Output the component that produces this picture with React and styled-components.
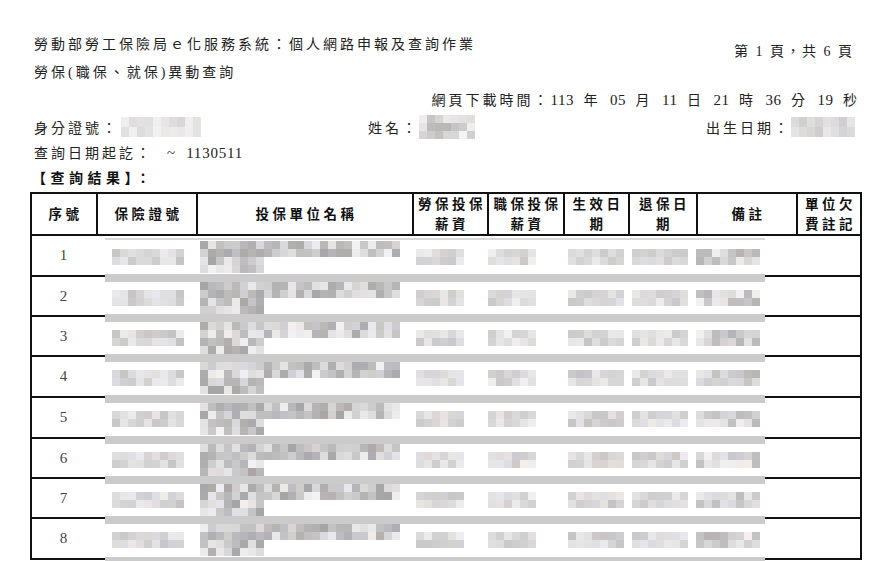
import React from "react";
import styled, { createGlobalStyle } from "styled-components";

const GlobalStyle = createGlobalStyle`
  html, body { margin: 0; padding: 0; background: #fff; }
  body {
    font-family: "Liberation Serif", "Noto Sans CJK TC", serif;
    color: #222;
  }
`;

const COLS = "66px 100px 216px 75px 76px 65px 68px 100px 62px";

const Page = styled.div`
  width: 892px;
  height: 561px;
  overflow: hidden;
  box-sizing: border-box;
  padding: 31px 30px 0 30px;
  font-size: 14px;
  letter-spacing: 3px;
`;

const TopRow = styled.div`
  display: flex;
  justify-content: space-between;
  align-items: flex-start;
`;

const TitleBlock = styled.div`
  padding-left: 4px;
`;

const Line = styled.div`
  line-height: 28px;
  white-space: nowrap;
`;

const PageNo = styled.div`
  margin-top: 7px;
  padding-right: 8px;
  line-height: 28px;
  letter-spacing: 2px;
  white-space: nowrap;
`;

const Download = styled.div`
  text-align: right;
  line-height: 26px;
  padding-right: 2px;
  letter-spacing: 3px;
  word-spacing: 3px;
  white-space: nowrap;
`;

const InfoRow = styled.div`
  display: flex;
  align-items: center;
  height: 26px;
  padding-left: 4px;
  padding-right: 7px;
`;

const InfoItem = styled.div`
  display: flex;
  align-items: center;
  white-space: nowrap;
  width: ${(p) => (p.$w ? `${p.$w}px` : "auto")};
  margin-left: ${(p) => (p.$push ? "auto" : "0")};
`;

const Query = styled.div`
  padding-left: 4px;
  line-height: 26px;
  white-space: nowrap;
`;

const Num = styled.span`
  font-size: 15px;
  letter-spacing: ${(p) => (p.$ls != null ? p.$ls : 3)}px;
  margin-left: ${(p) => p.$ml || 0}px;
`;

const ResultLabel = styled.div`
  padding-left: 2px;
  height: 24px;
  line-height: 24px;
  font-weight: 700;
  letter-spacing: 4.5px;
  color: #111;
  margin-bottom: 1px;
`;

const Table = styled.div`
  width: 832px;
  box-sizing: border-box;
  border: 2px solid #111;
  border-bottom: none;
`;

const HeaderRow = styled.div`
  display: grid;
  grid-template-columns: ${COLS};
  height: 42px;
  box-sizing: border-box;
  border-bottom: 2px solid #111;
`;

const HeadCell = styled.div`
  display: flex;
  align-items: center;
  justify-content: center;
  text-align: center;
  box-sizing: border-box;
  border-right: 2px solid #111;
  font-family: "Noto Sans CJK TC", sans-serif;
  font-weight: 700;
  font-size: 13.5px;
  line-height: 19.6px;
  letter-spacing: 3.5px;
  padding-left: 3px;
  color: #111;
  &:last-child { border-right: none; }
`;

const BodyRow = styled.div`
  position: relative;
  display: grid;
  grid-template-columns: ${COLS};
  height: ${(p) => p.$h}px;
  box-sizing: border-box;
  border-bottom: 2px solid #111;
`;

const Bar = styled.div`
  position: absolute;
  left: 73px;
  width: 660px;
  bottom: -7px;
  height: 8px;
  background: #cbcbcb;
  z-index: 1;
`;

const TopBar = styled.div`
  position: absolute;
  left: 73px;
  width: 660px;
  top: 2px;
  height: 2px;
  background: #d9d9d9;
`;

const NumCell = styled.div`
  display: flex;
  align-items: center;
  justify-content: center;
  font-family: "Liberation Serif", serif;
  font-size: 15px;
  letter-spacing: 0;
  color: #444;
  padding-right: 3px;
`;

const BlurCell = styled.div`
  min-width: 0;
`;

const PixelGrid = styled.div`
  display: grid;
  grid-template-columns: repeat(${(p) => p.$cols}, ${(p) => p.$pw}px);
  grid-auto-rows: ${(p) => p.$ph}px;
  margin-top: ${(p) => p.$mt || 0}px;
  margin-left: ${(p) => p.$ml || 0}px;
  width: max-content;
`;

const Pixel = styled.div``;

const rand = (seed) => {
  const x = Math.sin(seed * 12.9898 + 78.233) * 43758.5453;
  return x - Math.floor(x);
};

function PixelBlock({ cols, rows, seed, lo = 190, hi = 240, pw = 8, ph = 8, mask, mt, ml }) {
  const cells = [];
  for (let r = 0; r < rows; r++) {
    for (let c = 0; c < cols; c++) {
      const visible = mask ? mask(r, c) : true;
      if (!visible) {
        cells.push(<Pixel key={`${r}-${c}`} />);
        continue;
      }
      const s = seed * 1000 + r * 97 + c * 13;
      const v = Math.round(lo + (hi - lo) * rand(s));
      const t = Math.round((rand(s + 7) - 0.5) * 10);
      const color = `rgb(${v + (t > 0 ? t : 0)},${v},${v + (t < 0 ? -t : 0)})`;
      cells.push(<Pixel key={`${r}-${c}`} style={{ background: color }} />);
    }
  }
  return (
    <PixelGrid $cols={cols} $pw={pw} $ph={ph} $mt={mt} $ml={ml}>
      {cells}
    </PixelGrid>
  );
}

const heights = [41, 40, 40, 41, 41, 40, 40, 41];

const nameMask = (r, c) => (r < 2 ? true : c < 8);

function Row({ n, h }) {
  const s = n * 10;
  return (
    <BodyRow $h={h}>
      {n === 1 && <TopBar />}
      <NumCell>{n}</NumCell>
      <BlurCell>
        <PixelBlock cols={9} rows={2} seed={s + 1} lo={195} hi={235} mt={13} ml={14} />
      </BlurCell>
      <BlurCell>
        <PixelBlock cols={25} rows={4} seed={s + 2} lo={165} hi={242} mt={5} ml={2} mask={nameMask} />
      </BlurCell>
      <BlurCell>
        <PixelBlock cols={6} rows={2} seed={s + 3} lo={200} hi={238} mt={13} ml={2} />
      </BlurCell>
      <BlurCell>
        <PixelBlock cols={6} rows={2} seed={s + 4} lo={200} hi={240} mt={13} ml={-1} />
      </BlurCell>
      <BlurCell>
        <PixelBlock cols={7} rows={2} seed={s + 5} lo={195} hi={235} mt={13} ml={3} />
      </BlurCell>
      <BlurCell>
        <PixelBlock cols={7} rows={2} seed={s + 6} lo={200} hi={235} mt={13} ml={2} />
      </BlurCell>
      <BlurCell>
        <PixelBlock cols={8} rows={2} seed={s + 7} lo={180} hi={242} mt={13} ml={-2} />
      </BlurCell>
      <BlurCell />
      <Bar />
    </BodyRow>
  );
}

export default function App() {
  return (
    <>
      <GlobalStyle />
      <Page>
        <TopRow>
          <TitleBlock>
            <Line>勞動部勞工保險局ｅ化服務系統：個人網路申報及查詢作業</Line>
            <Line>勞保(職保、就保)異動查詢</Line>
          </TitleBlock>
          <PageNo>第 1 頁，共 6 頁</PageNo>
        </TopRow>
        <Download>
          網頁下載時間：<Num $ls={0.5}>113</Num> 年 <Num $ls={0.5}>05</Num> 月 <Num $ls={0.5}>11</Num> 日 <Num $ls={0.5}>21</Num> 時 <Num $ls={0.5}>36</Num> 分 <Num $ls={0.5}>19</Num> 秒
        </Download>
        <InfoRow>
          <InfoItem $w={334}>
            身分證號：
            <PixelBlock cols={10} rows={2} seed={901} lo={215} hi={240} pw={8} ph={10} ml={2} />
          </InfoItem>
          <InfoItem>
            姓名：
            <PixelBlock cols={7} rows={3} seed={902} lo={180} hi={245} pw={8} ph={8} ml={0} />
          </InfoItem>
          <InfoItem $push>
            出生日期：
            <PixelBlock cols={8} rows={2} seed={903} lo={205} hi={235} pw={8} ph={10} ml={0} />
          </InfoItem>
        </InfoRow>
        <Query>
          查詢日期起訖：<Num $ml={14} $ls={0}>~</Num><Num $ml={11} $ls={0.8}>1130511</Num>
        </Query>
        <ResultLabel>【查詢結果】：</ResultLabel>
        <Table>
          <HeaderRow>
            <HeadCell>序號</HeadCell>
            <HeadCell>保險證號</HeadCell>
            <HeadCell>投保單位名稱</HeadCell>
            <HeadCell>勞保投保<br />薪資</HeadCell>
            <HeadCell>職保投保<br />薪資</HeadCell>
            <HeadCell>生效日<br />期</HeadCell>
            <HeadCell>退保日<br />期</HeadCell>
            <HeadCell>備註</HeadCell>
            <HeadCell>單位欠<br />費註記</HeadCell>
          </HeaderRow>
          {heights.map((h, i) => (
            <Row key={i} n={i + 1} h={h} />
          ))}
        </Table>
      </Page>
    </>
  );
}
